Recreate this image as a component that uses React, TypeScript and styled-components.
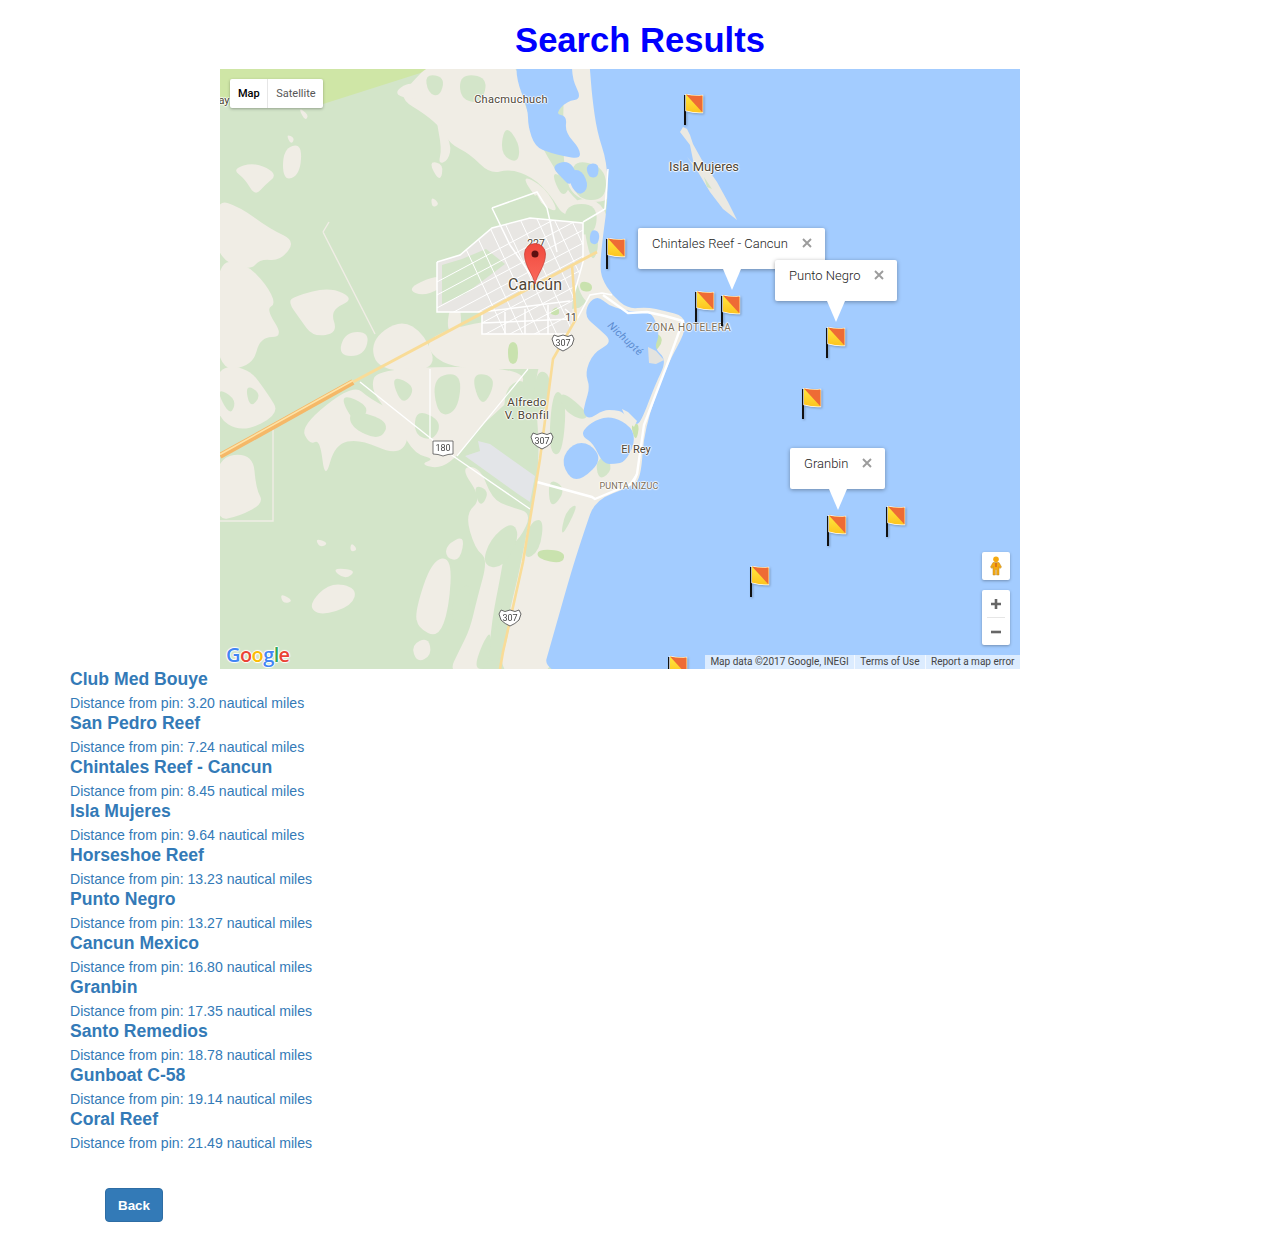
import styled, { createGlobalStyle } from 'styled-components'

const GlobalStyle = createGlobalStyle`
  html, body {
    margin: 0;
    padding: 0;
    background: #ffffff;
    font-family: "Liberation Sans", Arial, sans-serif;
    font-size: 14px;
    line-height: 20px;
    color: #333333;
  }
`

const Page = styled.div`
  width: 1280px;
  padding: 20px 0 35px;
`
const Title = styled.h1`
  margin: 0 0 9px;
  height: 40px;
  font-size: 34.6px;
  line-height: 40px;
  font-weight: 700;
  color: #0000ff;
  text-align: center;
`
const MapFrame = styled.div`
  position: relative;
  width: 800px;
  height: 600px;
  margin-left: 220px;
  overflow: hidden;
  background: #d3e5c9;
  font-family: Roboto, Arial, sans-serif;
`
const BaseMap = styled.svg`
  display: block;
  filter: blur(0.35px);
`
const MapLabel = styled.span<{ $x: number; $y: number; $size: number; $ls?: number; $color?: string }>`
  position: absolute;
  left: ${(p) => p.$x}px;
  top: ${(p) => p.$y}px;
  transform: translate(-50%, -50%);
  font-size: ${(p) => p.$size}px;
  line-height: ${(p) => p.$size + 1}px;
  letter-spacing: ${(p) => p.$ls ?? 0}px;
  color: ${(p) => p.$color ?? '#4f4636'};
  text-align: center;
  white-space: nowrap;
  text-shadow: -1px 0 1px #fff, 1px 0 1px #fff, 0 -1px 1px #fff, 0 1px 1px #fff;
`
const LagoonLabel = styled.span`
  position: absolute;
  left: 405px;
  top: 270px;
  transform: translate(-50%, -50%) rotate(43deg);
  font-size: 10.5px;
  font-style: italic;
  letter-spacing: 0.4px;
  color: #5b8bd0;
  white-space: nowrap;
`
const FlagSlot = styled.svg<{ $x: number; $y: number }>`
  position: absolute;
  left: ${(p) => p.$x - 220}px;
  top: ${(p) => p.$y - 69}px;
  filter: drop-shadow(1px 1px 1px rgba(0, 0, 0, 0.25));
`
const PinSlot = styled.svg`
  position: absolute;
  left: 303px;
  top: 173px;
`
const Bubble = styled.div<{ $x: number; $y: number; $w: number }>`
  position: absolute;
  left: ${(p) => p.$x - 220}px;
  top: ${(p) => p.$y - 69}px;
  width: ${(p) => p.$w}px;
  height: 41px;
  box-sizing: border-box;
  padding: 7px 12px 0 14px;
  display: flex;
  justify-content: space-between;
  align-items: flex-start;
  background: #ffffff;
  border-radius: 2px;
  box-shadow: 0 1px 4px rgba(0, 0, 0, 0.35);
  font-size: 13px;
  font-weight: 300;
  line-height: 18px;
  color: #222;
  white-space: nowrap;

  &::after {
    content: '';
    position: absolute;
    left: 50%;
    bottom: -21px;
    margin-left: -9px;
    border-style: solid;
    border-width: 21px 9px 0;
    border-color: #ffffff transparent transparent;
  }
`
const CloseIcon = styled.svg`
  margin-top: 2px;
  flex: none;
`
const MapTypeBar = styled.div`
  position: absolute;
  left: 10px;
  top: 10px;
  height: 29px;
  display: flex;
  background: #ffffff;
  border-radius: 2px;
  box-shadow: 0 1px 3px rgba(0, 0, 0, 0.3);
  font-size: 11px;
  line-height: 29px;
`
const MapTypeButton = styled.div<{ $active?: boolean }>`
  padding: 0 7.5px 0 8px;
  color: ${(p) => (p.$active ? '#000' : '#565656')};
  font-weight: ${(p) => (p.$active ? 500 : 400)};
  & + & {
    border-left: 1px solid #e6e6e6;
  }
`
const ControlBox = styled.div<{ $top: number; $h: number }>`
  position: absolute;
  right: 10px;
  top: ${(p) => p.$top}px;
  width: 28px;
  height: ${(p) => p.$h}px;
  display: flex;
  flex-direction: column;
  align-items: center;
  background: #ffffff;
  border-radius: 2px;
  box-shadow: 0 1px 3px rgba(0, 0, 0, 0.3);
`
const ControlCell = styled.div`
  flex: 1;
  display: flex;
  align-items: center;
  justify-content: center;
`
const ZoomDivider = styled.div`
  flex: none;
  width: 18px;
  height: 1px;
  background: #e6e6e6;
`
const Attribution = styled.div`
  position: absolute;
  right: 0;
  bottom: 0;
  height: 14px;
  display: flex;
  background: rgba(255, 255, 255, 0.62);
  font-size: 10px;
  line-height: 14px;
  color: #444;
  white-space: nowrap;
`
const AttributionItem = styled.span`
  padding: 0 5.5px 0 5px;
  & + & {
    border-left: 1px solid rgba(255, 255, 255, 0.7);
  }
`
const GoogleLogo = styled.div`
  position: absolute;
  left: 6px;
  bottom: 1px;
  font-family: "Open Sans", Roboto, sans-serif;
  font-size: 20px;
  line-height: 26px;
  font-weight: 600;
  letter-spacing: -0.6px;
  text-shadow: -1px 0 1px #fff, 1px 0 1px #fff, 0 -1px 1px #fff, 0 1px 1px #fff;
`
const LogoLetter = styled.span<{ $c: string }>`
  color: ${(p) => p.$c};
`
const ResultList = styled.div`
  padding-left: 70px;
`
const ResultItem = styled.div`
  height: 44px;
`
const ResultName = styled.a`
  display: block;
  margin-bottom: 4px;
  font-size: 17.6px;
  line-height: 20px;
  font-weight: 700;
  color: #337ab7;
`
const ResultDistance = styled.a`
  display: block;
  font-size: 14.1px;
  line-height: 20px;
  color: #337ab7;
`
const BackButton = styled.button`
  display: block;
  margin: 35px 0 0 105px;
  width: 58px;
  height: 34px;
  padding: 0;
  font-family: inherit;
  font-size: 13.4px;
  font-weight: 700;
  color: #ffffff;
  background: #337ab7;
  border: 1px solid #2e6da4;
  border-radius: 4px;
`

const results = [
  ['Club Med Bouye', '3.20'],
  ['San Pedro Reef', '7.24'],
  ['Chintales Reef - Cancun', '8.45'],
  ['Isla Mujeres', '9.64'],
  ['Horseshoe Reef', '13.23'],
  ['Punto Negro', '13.27'],
  ['Cancun Mexico', '16.80'],
  ['Granbin', '17.35'],
  ['Santo Remedios', '18.78'],
  ['Gunboat C-58', '19.14'],
  ['Coral Reef', '21.49'],
]

const flags = [
  [684, 94], [606, 238], [695, 291], [721, 295], [826, 327],
  [802, 388], [827, 515], [886, 506], [750, 566], [668, 656],
]

const beige = [
  // everything between the highway 307 and the sea, hotel zone included
  '312,290 370,225 400,225 480,240 480,265 440,420 380,445 360,500 335,610 276,610 290,540 300,500 315,420 320,380',
  '200,262 355,240 375,235 368,300 310,300 220,300',
  '340,130 390,130 390,215 405,240 370,240 355,215',
  '345,-10 375,-10 380,30 382,63 392,93 394,135 350,130 342,85',
  // north of the city
  '213,-8 297,-8 300,20 310,50 320,75 335,100 350,125 362,135 345,150 330,125 312,108 290,100 270,105 250,85 230,75 222,60 205,45 180,30 190,15',
  '172,25 190,12 205,22 197,32',
  '300,105 325,118 340,145 320,135',
  '215,45 232,75 228,92 218,95 222,80',
  '208,92 224,95 220,114',
  // west side
  '12,100 35,93 58,105 45,116 35,127 25,110',
  '63,80 82,74 80,106 63,112',
  '66,65 75,69 71,76',
  '-5,130 20,138 50,160 76,172 60,192 40,190 30,202 -5,188',
  '-5,192 25,194 46,215 56,235 46,240 64,268 40,268 33,297 -5,302',
  '75,227 110,218 135,230 110,241 118,264 93,268 80,250 68,233',
  '125,263 150,263 144,287 118,287',
  '150,272 180,250 205,265 218,302 158,302',
  '186,220 216,206 232,212 205,228',
  '229,238 241,236 241,264 227,264',
  '78,38 89,46 85,52',
  '211,127 220,135 212,139',
  // south of the highway
  '158,298 312,298 292,330 257,360 240,385 220,400 200,395 215,390 195,385 180,360 178,390 170,345 150,320',
  '80,357 133,315 150,330 180,345 190,372 175,386 140,370 115,375 105,412 100,370 90,376',
  '-5,298 28,298 48,325 60,345 22,364 -5,347',
  '-5,388 33,384 36,420 44,434 20,447 -5,452',
  '240,398 260,398 272,430 290,438 312,444 300,470 285,480 280,510 272,550 267,605 228,605 240,580 250,560 257,530 268,490 255,480 245,445 262,430',
  '195,542 212,491 232,488 229,540 218,569 198,559',
  '88,536 110,513 137,519 132,537 100,547',
  '111,499 137,501 125,511',
  '60,524 74,532 63,535',
  '95,469 109,474 100,479',
  '131,473 138,481 130,483',
  '226,476 245,466 240,492 226,489',
  '191,576 208,568 212,586 197,594',
]

const greenSpots = [
  '240,5 268,8 262,35 240,30',
  '285,55 300,75 298,95 280,85',
  '205,5 225,8 220,28 208,24',
  '330,100 352,115 342,130',
  '345,135 378,135 375,168 345,162',
  '350,90 386,98 386,132 354,130',
  '362,150 381,170 372,198',
  '170,305 197,318 182,338',
  '212,308 242,303 238,342 218,348',
  '250,303 278,308 262,342',
  '118,323 152,338 135,357',
  '-5,318 17,330 10,348',
  '285,318 307,308 302,347 284,352',
  '333,318 347,330 342,388 328,382',
  '328,408 347,420 330,442',
  '308,455 324,448 320,482 303,492',
  '345,442 360,433 340,472',
  '272,558 292,548 282,592 266,592',
  '270,470 292,452 300,468 282,500 262,496',
  '232,530 250,510 250,548 232,556',
  '262,575 272,560 268,600 254,600',
  '196,340 222,352 214,372 194,366',
  '130,340 170,352 160,372 130,358',
  '25,315 42,325 30,340',
  '253,415 270,422 260,440',
  '316,300 332,306 325,345 312,345',
  '375,395 385,385 393,400 380,412',
  '340,320 370,345 362,352 342,340',
]

const parks = [
  '318,480 345,482 343,495 317,490',
  '288,273 298,273 298,295 288,295',
  '360,212 372,214 372,223 360,222',
  '328,245 338,236 340,247',
  '382,232 397,245 387,252',
  '420,246 432,247 420,262',
  '405,248 418,248 412,260',
  '433,262 445,270 432,287',
  '410,355 420,354 416,374',
]

const water = [
  '368,-20 370,0 372,27 377,63 387,93 388,130 383,166 380,196 382,210 392,226 408,240 427,238 445,242 464,247 466,262 447,296 424,360 421,410 410,418 375,431 365,460 352,500 335,560 318,620 900,700 900,-100',
  '368,234 378,227 388,236 403,241 417,243 430,243 437,254 439,268 434,279 447,291 435,316 421,353 415,356 403,343 395,341 383,341 370,350 363,345 365,334 370,318 365,304 373,284 393,273 378,259 365,248',
  '363,361 375,351 392,347 412,358 415,374 405,393 395,395 383,395 373,374 363,368',
  '341,391 353,374 370,374 382,391 363,410 350,410',
  '297,-15 352,-15 352,10 362,30 347,32 335,45 347,47 345,63 360,80 360,90 343,87 331,84 315,78 308,57 308,40 296,10',
  '331,97 348,91 358,105 350,117 343,110',
  '350,101 362,101 369,118 360,127 350,117',
  '366,95 379,94 378,109 368,108',
  '371,160 380,163 378,176 369,174',
]

const islaMujeres = '460,63 463,58 467,60 470,66 473,75 483,93 497,113 508,133 517,151 503,140 490,123 478,103 467,88 474,96 470,76'

// city blocks: streets run along and across the highway, cut off at the city's edge
const cityOutline = '217,193 240,186 272,159 310,149 363,154 363,193 353,229 350,265 262,265 262,243 217,243'
const alongStreets = Array.from({ length: 9 }, (_, i) => `M200 ${222 + i * 13} L380 ${126 + i * 13}`)
const acrossStreets = Array.from({ length: 9 }, (_, i) => `M${232 + i * 17} 150 L${288 + i * 17} 270`)

const ringRoads = [
  'M217,193 L240,186 L272,159 L310,149 L363,154 L363,193 L353,229',
  'M217,193 L217,243 L262,243 L262,265 L350,265',
  'M272,139 L317,123 L327,139 L337,183',
  'M272,139 L290,176 L313,209',
  'M262,243 L350,232',
  'M262,254 L350,250',
  'M285,243 L285,265 M305,240 L305,265 M328,236 L328,265',
  'M345,240 L357,250 L370,226 L382,224 L392,226',
  'M363,153 L385,140 L388,100',
]

// round a polygon's corners so that it reads as a map shape
const smooth = (points: string) => {
  const p = points.split(' ').map((s) => s.split(',').map(Number))
  const mid = (a: number[], b: number[]) => `${(a[0] + b[0]) / 2} ${(a[1] + b[1]) / 2}`
  const segs = p.map((pt, i) => `Q${pt[0]} ${pt[1]} ${mid(pt, p[(i + 1) % p.length])}`)
  return `M${mid(p[p.length - 1], p[0])} ${segs.join(' ')} Z`
}

function Flag({ x, y }: { x: number; y: number }) {
  const gradId = `flag-${x}`
  return (
    <FlagSlot $x={x} $y={y} width="22" height="33" viewBox="0 0 22 33">
      <defs>
        <linearGradient id={gradId} x1="0" y1="0" x2="0" y2="1">
          <stop offset="0" stopColor="#ffe83f" />
          <stop offset="1" stopColor="#fdc41f" />
        </linearGradient>
      </defs>
      <rect x="0" y="1" width="2" height="30" fill="#111" />
      <path d="M2 .5 Q10 2.5 18.5 1.5 V18.5 Q10 19 2 16.5 Z" fill="#fff" stroke="#fff" strokeWidth="1.4" />
      <path d="M2 .5 Q10 2.5 18.5 1.5 V18.5 Q10 19 2 16.5 Z" fill={`url(#${gradId})`} />
      <path d="M2 .5 Q10 2.5 18.5 1.5 V18.5 Z" fill="#ee6b35" />
    </FlagSlot>
  )
}

function Shield({ x, y, label, plain }: { x: number; y: number; label: string; plain?: boolean }) {
  return (
    <g transform={`translate(${x} ${y})`}>
      {plain ? (
        <path d="M-10 -7 H10 V6 Q5 6 0 8 Q-5 6 -10 6 Z" fill="#fff" stroke="#555" strokeWidth="0.8" />
      ) : (
        <path d="M-9 -8 L-5 -6.5 L0 -8 L5 -6.5 L9 -8 L11 -4 L9 2 Q5 6 0 8 Q-5 6 -9 2 L-11 -4 Z" fill="#fff" stroke="#555" strokeWidth="0.9" />
      )}
      <text x="0" y="3" textAnchor="middle" fontSize="9" fontFamily="Roboto, sans-serif" fill="#444">{label}</text>
    </g>
  )
}

function CloseMark() {
  return (
    <CloseIcon width="12" height="12" viewBox="0 0 12 12">
      <path d="M2 2 L10 10 M10 2 L2 10" stroke="#9c9c9c" strokeWidth="1.9" />
    </CloseIcon>
  )
}

export default function App() {
  return (
    <Page>
      <GlobalStyle />
      <Title>Search Results</Title>
      <MapFrame>
        <BaseMap width="800" height="600" viewBox="0 0 800 600">
          <defs>
            <clipPath id="cityClip"><polygon points={cityOutline} /></clipPath>
          </defs>
          <path d="M0 0 H213 L100 36 H0 Z" fill="#cfe6a6" />
          {beige.map((p) => <path key={p} d={smooth(p)} fill="#f0ede5" />)}
          {greenSpots.map((p) => <path key={p} d={smooth(p)} fill="#d3e5c9" />)}
          <polygon points="245,387 260,382 258,372 270,375 315,407 310,433 298,425" fill="#e3e5e8" />
          <polygon points={cityOutline} fill="#e8e6e3" />
          <polygon points="222,196 242,190 266,180 285,195 245,225 222,235" fill="#d3e5c9" />
          <polygon points="275,140 317,126 330,150 300,150 278,158" fill="#d3e5c9" />
          {parks.map((p) => <path key={p} d={smooth(p)} fill="#c9e2ae" />)}
          {water.map((p) => <path key={p} d={smooth(p)} fill="#a3ccff" />)}
          <polygon points={islaMujeres} fill="#ebe9e2" />
          <polygon points="484,108 492,120 487,118" fill="#cfe3c4" />
          <polygon points="428,278 436,282 444,291 436,295 429,294" fill="#e3e3df" />
          <polygon points="402,340 408,343 417,352 414,358 406,350" fill="#f0ede5" />

          <g clipPath="url(#cityClip)" stroke="#ffffff" strokeWidth="1" fill="none">
            {alongStreets.map((d) => <path key={d} d={d} />)}
            {acrossStreets.map((d) => <path key={d} d={d} />)}
          </g>
          <g fill="none" stroke="#ffffff" strokeWidth="1.5">
            {ringRoads.map((d) => <path key={d} d={d} />)}
          </g>
          <g fill="none" stroke="#ffffff" strokeLinejoin="round">
            <path d="M383,226 L408,244 L427,243 L445,247 L463,252 L447,296 L424,356 L417,405 L413,414 L375,430 L372,428 L317,413" strokeWidth="2.4" />
            <path d="M140,313 L233,387 L310,440" strokeWidth="1.4" />
            <path d="M308,300 L237,387 M210,300 V370" strokeWidth="1.2" />
            <path d="M417,405 L408,418" strokeWidth="1.4" />
          </g>
          <path d="M103,163 L109,153 M103,163 L155,265" stroke="#f0ede5" strokeWidth="1.4" fill="none" />
          <path d="M53,360 V452 H0" stroke="#f0ede5" strokeWidth="1.4" fill="none" />
          <path d="M0,387 L133,313" stroke="#f5b868" strokeWidth="6" />
          <path d="M0,385.5 L133,311.5" stroke="#fde3a7" strokeWidth="1.6" />
          <path d="M133,313 L377,183" stroke="#f9dc98" strokeWidth="3" />
          <path d="M352,196 L356,250 L333,290 L320,390 L303,493 L283,583 L280,600" fill="none" stroke="#f9dc98" strokeWidth="2.6" />

          <Shield x={343} y={274} label="307" />
          <Shield x={322} y={372} label="307" />
          <Shield x={290} y={549} label="307" />
          <Shield x={223} y={379} label="180" plain />
        </BaseMap>

        <MapLabel $x={291} $y={31} $size={11} $ls={0.3}>Chacmuchuch</MapLabel>
        <MapLabel $x={484} $y={98} $size={13}>Isla Mujeres</MapLabel>
        <MapLabel $x={316} $y={175} $size={10.5}>227</MapLabel>
        <MapLabel $x={351} $y={248} $size={10}>11</MapLabel>
        <MapLabel $x={469} $y={258} $size={10} $ls={0.5} $color="#7c6f58">ZONA HOTELERA</MapLabel>
        <MapLabel $x={409} $y={417} $size={9} $ls={0.2} $color="#7c6f58">PUNTA NIZUC</MapLabel>
        <MapLabel $x={416} $y={381} $size={11}>El Rey</MapLabel>
        <MapLabel $x={307} $y={339} $size={11.5} $ls={0.3}>Alfredo<br />V. Bonfil</MapLabel>
        <MapLabel $x={315} $y={215} $size={16}>Cancún</MapLabel>
        <MapLabel $x={4} $y={32} $size={11}>ay</MapLabel>
        <LagoonLabel>Nichupté</LagoonLabel>

        <PinSlot width="24" height="43" viewBox="0 0 24 43">
          <defs>
            <linearGradient id="pinFill" x1="0" y1="0" x2="0" y2="1">
              <stop offset="0" stopColor="#f0493e" />
              <stop offset="1" stopColor="#fb6a5c" />
            </linearGradient>
          </defs>
          <path d="M12 42 C10.5 33 1.5 24 1.5 12 A10.5 10.5 0 0 1 22.5 12 C22.5 24 13.5 33 12 42 Z" fill="url(#pinFill)" stroke="#c53a2f" strokeWidth="0.7" />
          <circle cx="12" cy="12" r="3.5" fill="#5e1010" />
        </PinSlot>

        {flags.map(([x, y]) => <Flag key={`${x}-${y}`} x={x} y={y} />)}

        <Bubble $x={638} $y={228} $w={187}>Chintales Reef - Cancun<CloseMark /></Bubble>
        <Bubble $x={775} $y={260} $w={122}>Punto Negro<CloseMark /></Bubble>
        <Bubble $x={790} $y={448} $w={95}>Granbin<CloseMark /></Bubble>

        <MapTypeBar>
          <MapTypeButton $active>Map</MapTypeButton>
          <MapTypeButton>Satellite</MapTypeButton>
        </MapTypeBar>

        <ControlBox $top={483} $h={28}>
          <ControlCell>
            <svg width="14" height="20" viewBox="0 0 14 20">
              <circle cx="7" cy="3.2" r="2.8" fill="#f5a90f" />
              <path d="M4 6.5 H10 L12.5 11 L11 12.5 L10 10.5 V19 H7.6 V13.5 H6.4 V19 H4 V10.5 L3 12.5 L1.5 11 Z" fill="#f5a90f" stroke="#b9862a" strokeWidth="0.5" />
              <path d="M7 7 V11" stroke="#c9561a" strokeWidth="1.2" />
            </svg>
          </ControlCell>
        </ControlBox>
        <ControlBox $top={521} $h={55}>
          <ControlCell>
            <svg width="12" height="12" viewBox="0 0 12 12"><path d="M6 1 V11 M1 6 H11" stroke="#666" strokeWidth="2.6" /></svg>
          </ControlCell>
          <ZoomDivider />
          <ControlCell>
            <svg width="12" height="12" viewBox="0 0 12 12"><path d="M1 6 H11" stroke="#666" strokeWidth="2.6" /></svg>
          </ControlCell>
        </ControlBox>

        <GoogleLogo>
          <LogoLetter $c="#4285f4">G</LogoLetter>
          <LogoLetter $c="#ea4335">o</LogoLetter>
          <LogoLetter $c="#fbbc05">o</LogoLetter>
          <LogoLetter $c="#4285f4">g</LogoLetter>
          <LogoLetter $c="#34a853">l</LogoLetter>
          <LogoLetter $c="#ea4335">e</LogoLetter>
        </GoogleLogo>

        <Attribution>
          <AttributionItem>Map data ©2017 Google, INEGI</AttributionItem>
          <AttributionItem>Terms of Use</AttributionItem>
          <AttributionItem>Report a map error</AttributionItem>
        </Attribution>
      </MapFrame>

      <ResultList>
        {results.map(([name, miles]) => (
          <ResultItem key={name}>
            <ResultName>{name}</ResultName>
            <ResultDistance>Distance from pin: {miles} nautical miles</ResultDistance>
          </ResultItem>
        ))}
      </ResultList>
      <BackButton>Back</BackButton>
    </Page>
  )
}
